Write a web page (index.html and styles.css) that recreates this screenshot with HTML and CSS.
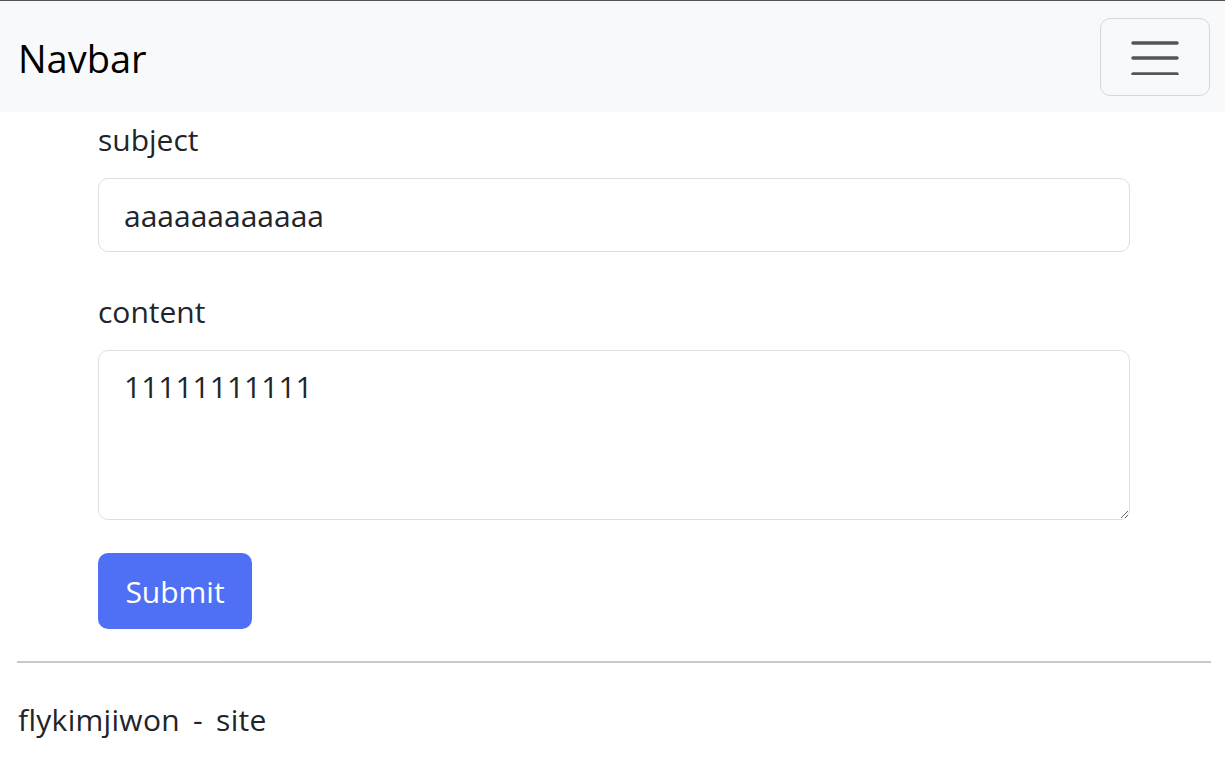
FILE: index.html
```html
<!DOCTYPE html>
<html lang="en">
<head>
<meta charset="utf-8">
<title>Navbar</title>
<link rel="stylesheet" href="styles.css">
</head>
<body>
<nav class="navbar">
  <a class="brand" href="#">Navbar</a>
  <button class="toggler" type="button" aria-label="Toggle navigation">
    <svg width="48" height="36" viewBox="0 0 48 36">
      <path d="M2 4H46M2 19H46M2 35H46" stroke="#555" stroke-width="3.5" stroke-linecap="round"/>
    </svg>
  </button>
</nav>
<main class="container">
  <form class="post-form">
    <div class="field">
      <label class="label" for="subject">subject</label>
      <input class="control input" id="subject" type="text" value="aaaaaaaaaaaa">
    </div>
    <div class="field">
      <label class="label" for="content">content</label>
      <textarea class="control textarea" id="content">11111111111</textarea>
    </div>
    <button class="submit" type="submit">Submit</button>
  </form>
</main>
<hr class="divider">
<footer class="footer">flykimjiwon - site</footer>
</body>
</html>
```
FILE: styles.css
```css
* { box-sizing: border-box; }
html, body { margin: 0; padding: 0; }
body {
  border-top: 1px solid #555;
  font-family: "Open Sans", "Noto Sans", sans-serif;
  color: #212529;
  background: #fff;
  font-size: 30px;
}
.navbar {
  height: 111px;
  background: #f8f9fa;
  display: flex;
  align-items: center;
  justify-content: space-between;
  padding: 0 15px 0 18px;
}
.brand {
  font-size: 38px;
  color: #000;
  text-decoration: none;
  margin-top: 3px;
}
.toggler {
  width: 110px;
  height: 78px;
  border: 1px solid #d6d7d8;
  border-radius: 10px;
  background: transparent;
  display: flex;
  align-items: center;
  justify-content: center;
  padding: 0;
}
.container {
  width: 1130px;
  padding: 7px 0 0 98px;
}
.field { margin-bottom: 39px; }
.field:last-of-type { margin-bottom: 33px; }
.label {
  display: block;
  line-height: 42px;
  margin-bottom: 17px;
}
.control {
  display: block;
  width: 100%;
  border: 1px solid #dcdfe3;
  border-radius: 10px;
  font-family: inherit;
  font-size: 30px;
  color: #212529;
  padding: 0 25px;
  background: #fff;
}
.input { height: 74px; }
.textarea {
  height: 170px;
  padding-top: 15px;
  line-height: 42px;
  resize: vertical;
}
.submit {
  display: block;
  width: 154px;
  height: 76px;
  border: none;
  border-radius: 10px;
  background: #4f70f5;
  color: #fff;
  font-family: inherit;
  font-size: 30px;
  padding: 0;
}
.divider {
  margin: 32px 14px 0 17px;
  border: none;
  border-top: 2px solid #c8c8c8;
  height: 0;
}
.footer {
  padding: 36px 18px 0;
  line-height: 42px;
  word-spacing: 5px;
  letter-spacing: 0.3px;
}
```
